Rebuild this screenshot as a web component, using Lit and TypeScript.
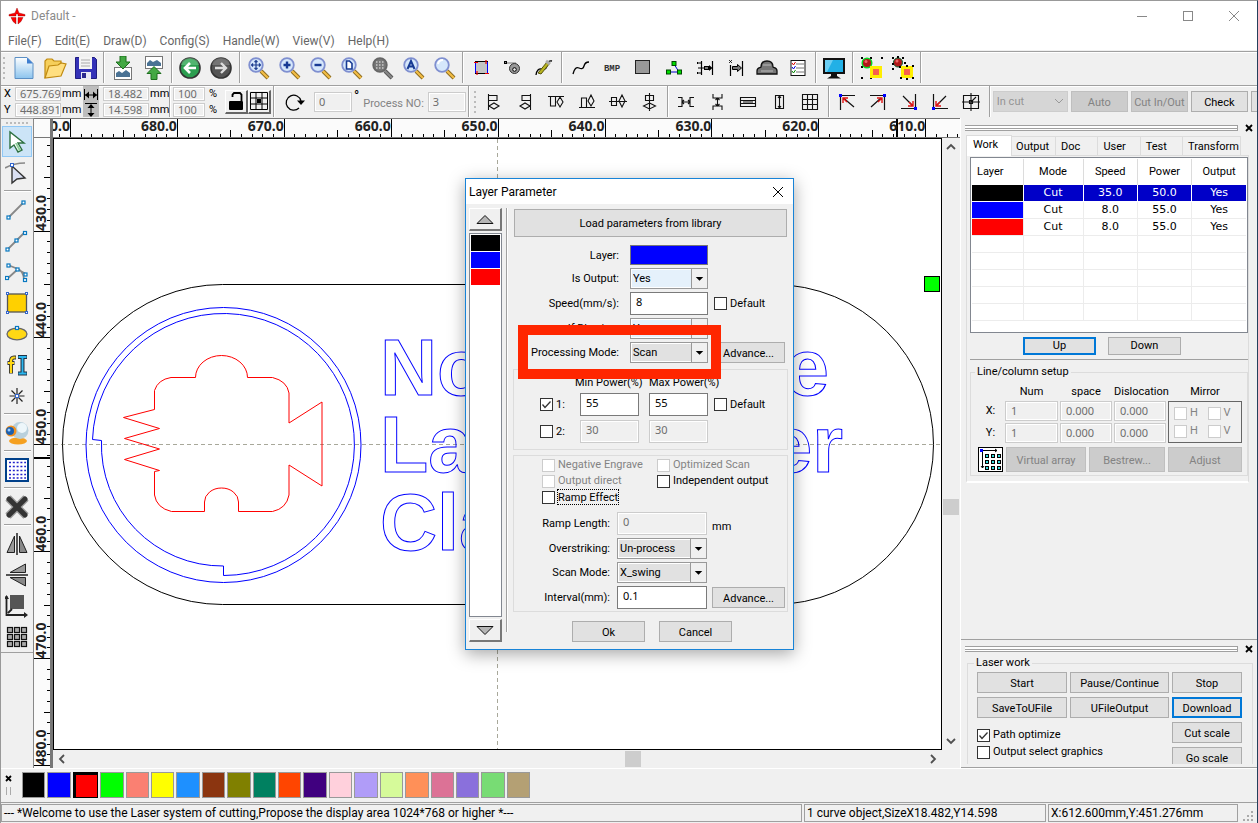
import { LitElement, html, css, svg } from "lit";
import { customElement } from "lit/decorators.js";
import { classMap } from "lit/directives/class-map.js";
import { styleMap } from "lit/directives/style-map.js";

type Tool = { name: string; art: unknown };

const icon = (art: unknown, size = 24) =>
  html`<svg class="ic" width=${size} height=${size} viewBox="0 0 24 24" aria-hidden="true">${art}</svg>`;

/* ---------- magnifier family ---------- */
const lens = (inside: unknown, grey = false) => svg`
  <path d="M14 15l7 7" stroke=${grey ? "#555" : "#8a6a20"} stroke-width="4"/>
  <path d="M14 15l7 7" stroke=${grey ? "#888" : "#f3bd45"} stroke-width="2.2"/>
  <circle cx="9" cy="9" r="6.800" fill=${grey ? "#777" : "#d5e7fb"} stroke=${grey ? "#666" : "#7f8fd0"} stroke-width="1.800"/>
  ${inside}`;

const fileTools: Tool[][] = [
  [
    { name: "New", art: svg`<defs><linearGradient id="pg" x1="0" y1="0" x2="0" y2="1"><stop offset="0" stop-color="#fff"/><stop offset="1" stop-color="#8cc4ee"/></linearGradient></defs>
      <path d="M3 1.500h12l6 6v15H3z" fill="url(#pg)" stroke="#5b8fc4"/><path d="M15 1.500v6h6z" fill="#3f7fd0"/>` },
    { name: "Open", art: svg`<path d="M2 22V5l2-2h5l2 2h7v5" fill="#f6cf5b" stroke="#c08a10" stroke-width="1.200"/><path d="M2 22L6 10l9-1 3-2 5 1-5 12z" fill="#ffdf80" stroke="#c08a10" stroke-width="1.200"/>` },
    { name: "Save", art: svg`<path d="M1.500 1.500h19l2 2v19h-21z" fill="#3432b8" stroke="#1f1d80"/><rect x="5" y="1" width="13" height="12" fill="#f4f4f4"/><path d="M7 4h9M7 7h9M7 10h9" stroke="#aaa"/><rect x="7" y="16" width="10" height="7" fill="#e9e9f5"/><rect x="8" y="17" width="4" height="5" fill="#2a288f"/>` },
  ],
  [
    { name: "Import", art: svg`<rect x="3.500" y="11.500" width="17" height="12" fill="#fff" stroke="#777"/><path d="M5 21v-4l3-2 3 2 4-3 4 3v4z" fill="#4a7294"/><path d="M9 0h6v6h4l-7 7-7-7h4z" fill="#43a843" stroke="#1d6e1d"/>` },
    { name: "Export", art: svg`<rect x="3.500" y=".5" width="17" height="12" fill="#fff" stroke="#777"/><path d="M5 10V7l3-3 3 2 4-2 4 3v3z" fill="#4a7294"/><path d="M9 23.500h6v-6h4l-7-7-7 7h4z" fill="#43a843" stroke="#1d6e1d"/>` },
  ],
  [
    { name: "Undo", art: svg`<circle cx="11" cy="12" r="10" fill="#2c9e50" stroke="#333" stroke-width="1.600"/><path d="M2 9a9 7 0 0 1 18 0z" fill="#6cc486" opacity=".6"/><path d="M17 12H7m4-5l-5 5 5 5" fill="none" stroke="#fff" stroke-width="2.600"/>` },
    { name: "Redo", art: svg`<circle cx="11" cy="12" r="10" fill="#555" stroke="#333" stroke-width="1.600"/><path d="M2 9a9 7 0 0 1 18 0z" fill="#8a8a8a" opacity=".6"/><path d="M5 12h10m-4-5l5 5-5 5" fill="none" stroke="#ddd" stroke-width="2.400"/>` },
  ],
  [
    { name: "Pan", art: lens(svg`<path d="M9 4.500v9M4.500 9h9M7.500 6L9 4.500 10.500 6M7.500 12L9 13.500l1.500-1.500M6 7.500L4.500 9 6 10.500M12 7.500L13.500 9 12 10.500" stroke="#1f3f90" stroke-width="1.200" fill="none"/>`) },
    { name: "Zoom in", art: lens(svg`<path d="M9 5.500v7M5.500 9h7" stroke="#173a94" stroke-width="2.400"/>`) },
    { name: "Zoom out", art: lens(svg`<path d="M5.500 9h7" stroke="#173a94" stroke-width="2.400"/>`) },
    { name: "Zoom page", art: lens(svg`<path d="M6.500 5h3l2.500 2.500V13H6.500z" fill="#fff" stroke="#173a94" stroke-width="1.600"/>`) },
    { name: "Zoom data", art: lens(svg`<path d="M5 6h8M5 9h8M5 12h8" stroke="#ccc" stroke-width="1.400" stroke-dasharray="1.500 1.500"/>`, true) },
    { name: "Zoom all", art: lens(svg`<path d="M5.500 13L9 5l3.500 8M7 10.500h4" fill="none" stroke="#173a94" stroke-width="2"/>`) },
    { name: "Zoom selection", art: lens(svg`<path d="M5 8a5 5 0 0 1 5-4" stroke="#fff" stroke-width="2" fill="none"/>`) },
  ],
  [
    { name: "Track frame", art: svg`<rect x="5.500" y="5.500" width="12" height="12" fill="#c4c4c4" stroke="#000"/><path d="M5.500 6v11M17.500 6v11" stroke="#00f"/><path d="M4 6.500h4M16 4v4M15 17.500h4M7 15v4" stroke="#e00" stroke-width="1.200"/>` },
    { name: "Cut property", art: svg`<path d="M4 7h11" stroke="#777"/><rect x="3.500" y="5.500" width="2" height="2" fill="#888" stroke="#000"/><circle cx="13.500" cy="12.500" r="5" fill="#999" stroke="#333"/><circle cx="13.500" cy="13.500" r="1.800" fill="#eee" stroke="#000"/>` },
    { name: "Set origin", art: svg`<path d="M4 19q1-7 6-6t5-4q1-5 5-4" fill="none" stroke="#000" stroke-width="1.300"/><path d="M6 17l9-11 3 1-9 11z" fill="#b8b420" stroke="#55520a"/><path d="M14 5l4 3" stroke="#aaa" stroke-width="3"/>` },
  ],
  [
    { name: "Curve smooth", art: svg`<path d="M4 18q2-8 6-6t5-2q1-4 5-4" fill="none" stroke="#000" stroke-width="1.300"/>` },
    { name: "Bitmap", art: svg`<text x="12" y="15" text-anchor="middle" class="bmp">BMP</text>` },
    { name: "Array output", art: svg`<rect x="4.500" y="4.500" width="14" height="13" fill="#999" stroke="#222"/>` },
    { name: "Check data", art: svg`<path d="M12 8l5 8H7" fill="none" stroke="#00c"/><g fill="#0d0" stroke="#040"><rect x="10" y="5.500" width="4" height="4"/><rect x="4.500" y="14" width="4" height="4"/><rect x="15.500" y="14" width="4" height="4"/></g>` },
    { name: "Offset", art: svg`<path d="M8.500 5v14M19.500 5v14" stroke="#000" stroke-width="1.200"/><path d="M9 12h3" stroke="#000"/><rect x="11.500" y="10.500" width="4" height="3" fill="#777" stroke="#000"/><path d="M16 9l3.500 3-3.500 3z"/><path d="M4.500 6v2M4.500 16v2M5 7h3M5 12h3M5 17h3" stroke="#000"/>` },
    { name: "Merge", art: svg`<path d="M6.500 9v11M18.500 5v15" stroke="#000" stroke-width="1.200"/><path d="M5 4l3 3M8 4L5 7" stroke="#000" stroke-width=".8"/><path d="M8.500 10.500h5V8.500l4 3.500-4 3.500v-2h-5z" fill="#777" stroke="#000"/>` },
    { name: "Delete overlap", art: svg`<path d="M2 15c0-4 3-3 4-4 0-5 3-6 6-6s6 1 6 6c1 1 4 0 4 4v3H2z" fill="#777" stroke="#111" stroke-width="1.300"/><path d="M6 15h12M8 9h8" stroke="#bbb"/>` },
    { name: "Options", art: svg`<rect x="5" y="4.500" width="14" height="15" fill="#fff" stroke="#111"/><path d="M10 8h8M10 12h8M10 16h8" stroke="#777"/><path d="M6 7l1.500 2 2-3" fill="none" stroke="#d00"/><path d="M6 11l1.500 2 2-3" fill="none" stroke="#00d"/><path d="M6 15l1.500 2 2-3" fill="none" stroke="#080"/>` },
  ],
  [
    { name: "Preview", art: svg`<rect x="0" y="2" width="22" height="16" fill="#111"/><rect x="2" y="4" width="18" height="12" fill="#22b0e6"/><path d="M2 4h8L4 16H2z" fill="#8bdcf8" opacity=".7"/><path d="M8 18h6v2l4 2.500H4L8 20z" fill="#111"/>` },
  ],
  [
    { name: "Group", art: svg`<g fill="#000"><path d="M1 1h2v2H1zM10 1h2v2h-2zM21 1h2v2h-2zM1 10h2v2H1zM1 21h2v2H1zM10 21h2v2h-2z"/></g><circle cx="7" cy="7" r="4.800" fill="#b01818" stroke="#0d2" stroke-width="1.400"/><circle cx="6" cy="5.500" r="1.500" fill="#e66"/><rect x="11.500" y="11.500" width="9" height="9" fill="#f8604c" stroke="#ffee00" stroke-width="3"/>` },
    { name: "Ungroup", art: svg`<circle cx="7" cy="6.500" r="4.500" fill="#b01818" stroke="#063"/><circle cx="6" cy="5" r="1.500" fill="#e66"/><rect x="11.500" y="11.500" width="9" height="9" fill="#f8604c" stroke="#ffee00" stroke-width="3"/><path fill="#000" d="M1 1h2v2H1zM6 0h2v2H6zM11 1h2v2h-2zM1 7h2v2H1zM13 6h2v2h-2zM1 12h2v2H1zM8 10h2v2H8zM15 9h2v2h-2zM21 9h2v2h-2zM21 21h2v2h-2zM9 21h2v2H9zM15 22h2v2h-2z"/>` },
  ],
];

const thin = (d: string) => svg`<path d=${d} fill="none" stroke="#111" stroke-width="1.100"/>`;
const corner = (line: string, x: number, y: number, arrow: string) => svg`
  <path d=${line} fill="none" stroke="#111" stroke-width="1.200"/>
  <path d=${arrow} fill="none" stroke="#e01010" stroke-width="1.400"/>
  <rect x=${x} y=${y} width="3" height="3" fill="#00f"/>`;

const alignTools: Tool[][] = [
  [
    { name: "Align left", art: thin("M6.500 4v16M7 5.500h8v5H7M7 16l5-3 5 3-5 3z") },
    { name: "Align right", art: thin("M17.500 4v16M17 5.500H9v5h8M17 16l-5-3-5 3 5 3z") },
    { name: "Align top", art: thin("M4 6.500h16M6.500 7v9h5V7M16 7l3 5-3 5-3-5z") },
    { name: "Align bottom", art: thin("M4 17.500h16M6.500 17V8h5v9M16 5l3 6-3 5-3-5z") },
    { name: "Center vertical", art: thin("M3 11.500h18M5.500 7.500h5v8h-5zM16 5l3 6-3 6-3-6z") },
    { name: "Center horizontal", art: thin("M12.500 3v18M8.500 5.500h8v5h-8zM12.500 13l6 3-6 3-6-3z") },
  ],
  [
    { name: "Equal horizontal space", art: thin("M4 7.500h4v9H4M20 7.500h-4v9h4M8 12h8M10 10l-2 2 2 2M14 10l2 2-2 2") },
    { name: "Equal vertical space", art: thin("M8 4v4h9V4M8 20v-4h9v4M12.500 8v8M10.500 10l2-2 2 2M10.500 14l2 2 2-2") },
    { name: "Same width", art: thin("M4.500 7.500h15v9h-15zM5 13.500h14M5 10.500h14M7 12h10") },
    { name: "Same height", art: thin("M8.500 5.500h8v13h-8zM12.500 6v12M11 8l1.500-2 1.500 2M11 16l1.500 2 1.500-2") },
    { name: "Same size", art: thin("M4.500 4.500h15v15h-15zM9.500 5v14M14.500 5v14M5 9.500h14M5 14.500h14") },
  ],
  [
    { name: "Top left", art: corner("M5.500 20V5.500H20M19 17L9 8.500", 4, 4, "M8 13V8h5M8 8l4 4") },
    { name: "Top right", art: corner("M18.500 20V5.500H4M5 17l10-9", 17, 4, "M11 8h5v5M16 8l-4 4") },
    { name: "Bottom right", art: corner("M18.500 4v14.500H4M6 6l9 9", 17, 17, "M16 11v5h-5M16 16l-4-4") },
    { name: "Bottom left", art: corner("M5.500 4v14.500H20M18 6L9 15", 4, 17, "M8 11v5h5M8 16l4-4") },
    { name: "Page center", art: thin("M4.500 5.500h15v13h-15zM12 3v18M3 12h18M12 12l5-5M10.500 10.500h3v3h-3z") },
  ],
];

const node = (x: number, y: number) => svg`<rect x=${x - 1.5} y=${y - 1.5} width="3" height="3" fill="#fff" stroke="#0878c0" stroke-width="1.200"/>`;
const sideTools: Tool[][] = [
  [
    { name: "Select", art: svg`<path d="M5 2v16l4-3 4 7 4-2-4-7h6z" fill="#fff" stroke="#2d7040" stroke-width="1.400"/><path d="M10 13l4 8 2-1-4-7z" fill="#8fd09c"/>` },
    { name: "Edit node", art: svg`<path d="M0 7q9-5 20-5" fill="none" stroke="#888" stroke-width="1.600"/><path d="M7 5v17l5-4 8-1z" fill="#d9dff2" stroke="#333" stroke-width="1.400"/><rect x="5.500" y="2.500" width="3" height="3" fill="#fff" stroke="#36c"/>` },
  ],
  [
    { name: "Line", art: svg`<path d="M3 20L19 4" stroke="#888" stroke-width="1.800"/>${node(3.5, 19.5)}${node(18.5, 4.5)}` },
    { name: "Polyline", art: svg`<path d="M2 21L20 3" stroke="#888" stroke-width="1.800"/>${node(2.5, 20.5)}${node(11.5, 11.5)}${node(20, 4)}` },
    { name: "Bezier", art: svg`<path d="M2 19L13 9M3 5l10 4q5 2 6 10M12 9l9 5" fill="none" stroke="#888" stroke-width="1.800"/>${node(3.5, 5.5)}${node(2, 18)}${node(12.5, 9.5)}${node(20.5, 14.5)}${node(20, 20)}` },
    { name: "Rectangle", art: svg`<rect x="2.500" y="3" width="19" height="18" fill="#ffd000" stroke="#555" stroke-width="1.300"/><g fill="#fff" stroke="#36c"><rect x="1.500" y="1.500" width="2" height="2"/><rect x="20.500" y="1.500" width="2" height="2"/><rect x="1.500" y="20.500" width="2" height="2"/><rect x="20.500" y="20.500" width="2" height="2"/></g>` },
    { name: "Ellipse", art: svg`<ellipse cx="12" cy="12" rx="10" ry="5.800" fill="#ffd814" stroke="#666" stroke-width="1.300"/>${node(12, 6)}` },
    { name: "Text", art: svg`<path d="M11 4.500h-2q-3 0-3 4v12M2.500 10h7" fill="none" stroke="#333" stroke-width="4"/><path d="M10.500 4.500h-1.500q-3 0-3 4v11.500M3 10h6" fill="none" stroke="#ffd814" stroke-width="2.200"/><path d="M13 4h9M13 20.500h9M17.500 4v16" stroke="#234" stroke-width="4"/><path d="M13.500 4h8M13.500 20.500h8M17.500 4v16" stroke="#2bb7f0" stroke-width="1.800"/>` },
    { name: "Point", art: svg`<path d="M12 4v16M4.500 12h15M6.500 6.500l11 11M17.500 6.500l-11 11" stroke="#222" stroke-width="1.200"/><rect x="10.500" y="10.500" width="3" height="3" fill="#fff" stroke="#36c"/>` },
  ],
  [{ name: "Camera", art: svg`<ellipse cx="13" cy="20" rx="9" ry="3.500" fill="#f5a020"/><circle cx="15" cy="9.500" r="8.500" fill="#b9d0dc"/><circle cx="17" cy="7" r="5" fill="#edf6fa"/><circle cx="6" cy="10" r="5.500" fill="#f09020"/><circle cx="5" cy="10" r="4" fill="#1c5fae"/><circle cx="4" cy="9" r="1.500" fill="#9cf"/>` }],
  [{ name: "Grid", art: svg`<rect x="1" y="1" width="22" height="22" fill="#fff" stroke="#00408a" stroke-width="2"/><path d="M4 4.500h17M4 8.500h17M4 12.500h17M4 16.500h17M4 20h17" stroke="#22c" stroke-width="1.600" stroke-dasharray="2 1.800"/>` }],
  [{ name: "Delete", art: svg`<path d="M3 3l18 18M21 3L3 21" stroke="#999" stroke-width="7.500"/><path d="M4 4l16 16M20 4L4 20" stroke="#333" stroke-width="5" stroke-linecap="round"/>` }],
  [
    { name: "Mirror horizontal", art: svg`<path d="M9.500 4v16.500H2z" fill="#999" stroke="#222"/><path d="M14.500 4v16.500H22z" fill="#888" stroke="#222"/><path d="M12 1v22" stroke="#222" stroke-width="1.500"/>` },
    { name: "Mirror vertical", art: svg`<path d="M20.500 1v8.500H5z" fill="#999" stroke="#222"/><path d="M20.500 23v-8.500H5z" fill="#888" stroke="#222"/><path d="M1 12h22" stroke="#222" stroke-width="1.500"/>` },
    { name: "Put to origin", art: svg`<rect x="5" y="1" width="14" height="14" fill="#555"/><path d="M1.500 2v19H21M3 19l4-4" fill="none" stroke="#222" stroke-width="1.800"/><path d="M-1 5l2.500-4L4 5zM19 18l4 3-4 3z" fill="#222"/>` },
    { name: "Array", art: svg`<g fill="#aaa" stroke="#111" stroke-width="1.200">${[2, 9, 16].map((x) => [2, 9, 16].map((y) => svg`<rect x=${x + 0.5} y=${y + 0.5} width="5" height="5"/>`))}</g>` },
  ],
];

const swatches = [
  "#000000", "#0000ff", "#ff0000", "#00ff00", "#fa8072", "#ffff00", "#1e90ff", "#8b3510", "#808000", "#008060",
  "#ff4500", "#40007f", "#ffd0dc", "#b09cf8", "#d6fa9a", "#ff9058", "#dc7296", "#8a70dc", "#78dc74", "#b4a074",
];

const layers = [
  { color: "#000000", mode: "Cut", speed: "35.0", power: "50.0", output: "Yes" },
  { color: "#0000ff", mode: "Cut", speed: "8.0", power: "55.0", output: "Yes" },
  { color: "#ff0000", mode: "Cut", speed: "8.0", power: "55.0", output: "Yes" },
];

const STEP = 106.9;
const range = (n: number) => Array.from({ length: n }, (_, i) => i);

const base = css`
  * { box-sizing: border-box; }
  :host { font: 11px/14px Roboto, sans-serif; color: #000; }
  button, input, select { font: inherit; color: inherit; margin: 0; padding: 0; border-radius: 0; min-width: 0; }
  .ic { display: block; flex: none; }
  .btn { background: #e1e1e1; border: 1px solid #adadad; height: 21px; white-space: nowrap; text-align: center; line-height: 16px; padding-top: 2px; }
  .btn.focus { border: 2px solid #0078d7; }
  .btn:disabled { background: #ccc; border-color: #bfbfbf; color: #838383; }
  .field { background: #fff; border: 1px solid #7a7a7a; height: 23px; padding: 0 5px 4px; width: 100%; font: 11px/14px "Noto Sans", sans-serif; }
  .field:disabled { background: #f0f0f0; border-color: #ccc; color: #6d6d6d; box-shadow: inset 0 0 0 1px #fff; }
  .check { display: inline-flex; align-items: center; gap: 3px; white-space: nowrap; line-height: 16px; }
  .check.off { color: #838383; }
  .check input { appearance: none; width: 13px; height: 13px; border: 1px solid #333; background: #fff; flex: none; }
  .check input:disabled { border-color: #ccc; }
  .check input:checked { background: #fff url("data:image/svg+xml,%3Csvg xmlns='http://www.w3.org/2000/svg' viewBox='0 0 11 11'%3E%3Cpath d='M1.500 5.500l2.500 3 5.500-6' fill='none' stroke='%23333' stroke-width='1.300'/%3E%3C/svg%3E"); }
`;

@customElement("layer-dialog")
export class LayerDialog extends LitElement {
  static styles = [base, css`
    :host { display: flex; flex-direction: column; width: 329px; background: #f0f0f0; border: 1px solid #1883d7; box-shadow: 0 4px 16px rgba(0, 0, 0, .35); }
    header { display: flex; justify-content: space-between; align-items: center; height: 25px; background: #fff; padding: 0 9px 0 3px; font-size: 12px; }
    header button { border: 0; background: none; display: flex; }
    .body { display: flex; padding: 4px 5px 7px 3px; }
    .rail { width: 33px; display: flex; flex-direction: column; gap: 2px; }
    .arrow { height: 23px; background: #f0f0f0; border: 1px solid #fff; border-right: 2px solid #777; border-bottom: 2px solid #777; display: flex; align-items: center; justify-content: center; }
    .list { flex: 1; border: 1px solid #828790; background: #fff; padding: 1px; display: flex; flex-direction: column; gap: 1px; }
    .list i { height: 16px; }
    .rule { width: 2px; background: #a0a0a0; border-right: 1px solid #fff; margin: 0 5px 10px 4px; }
    .main { flex: 1; min-width: 0; display: flex; flex-direction: column; }
    .load { height: 28px; margin: 1px 1px 8px 1px; }
    .top, .powers, .scan { display: grid; align-items: center; }
    .top { grid-template-columns: 112px 78px 73px; column-gap: 4px; row-gap: 3px; padding-left: 1px; margin-bottom: 6px; }
    .top .check { padding-left: 2px; }
    .lab { text-align: right; padding: 1px 7px 0 0; white-space: nowrap; }
    .sw { height: 20px; border: 1px solid #777; }
    .combo { display: grid; position: relative; height: 21px; }
    .combo select { appearance: none; width: 100%; height: 21px; border: 1px solid #999; padding: 1px 0 0 2px; background: #e1e1e1; box-shadow: inset 0 0 0 1px #fff; }
    .combo.light select { background: #e5f1fb; }
    .combo svg { position: absolute; right: 1px; top: 1px; background: #f0f0f0; border-left: 1px solid #999; pointer-events: none; }
    .box { border: 1px solid #dcdcdc; }
    .powers { height: 81px; padding: 5px 2px 5px 26px; grid-template-columns: 40px 69px 65px 1fr; grid-template-rows: 14px 23px 23px; row-gap: 4px; }
    .powers .field { width: 59px; }
    .cap { white-space: nowrap; justify-self: start; padding-top: 2px; }
    .cap.min { margin-left: -5px; }
    .scan { margin-top: 5px; padding: 2px 2px 2px 28px; }
    .opts { display: grid; grid-template-columns: 115px 1fr; grid-template-rows: 14px 14px 14px; row-gap: 2px; margin-bottom: 8px; align-items: center; }
    .focusring { outline: 1px dotted #000; line-height: 13px; padding-top: 1px; }
    .rows { display: grid; grid-template-columns: 75px 90px 73px; column-gap: 5px; row-gap: 3px; align-items: center; margin-left: -5px; }
    .rows .lab { padding-right: 2px; }
    .unit { padding-top: 6px; }
    footer { display: flex; gap: 14px; padding: 9px 0 0 59px; }
    footer .btn { width: 73px; }
  `];

  private combo(id: string, value: string, light = false) {
    return html`<span class=${classMap({ combo: true, light })}>
      <select id=${id}><option>${value}</option></select>
      <svg width="16" height="19" viewBox="0 0 16 19" aria-hidden="true"><path d="M4 8h8l-4 4z"/></svg>
    </span>`;
  }

  render() {
    return html`
      <header><span>Layer Parameter</span>
        <button aria-label="Close"><svg width="12" height="12" viewBox="0 0 12 12"><path d="M1 1l10 10M11 1L1 11" stroke="#000"/></svg></button>
      </header>
      <div class="body">
        <div class="rail">
          <button class="arrow" aria-label="Previous layer"><svg width="20" height="11" viewBox="0 0 20 11"><path d="M2 9.500l8-8 8 8z" fill="#b5b5b5" stroke="#111"/></svg></button>
          <div class="list">${layers.map((l) => html`<i style=${styleMap({ background: l.color })}></i>`)}</div>
          <button class="arrow" aria-label="Next layer"><svg width="20" height="11" viewBox="0 0 20 11"><path d="M2 1.500l8 8 8-8z" fill="#b5b5b5" stroke="#111"/></svg></button>
        </div>
        <div class="rule"></div>
        <div class="main">
          <button class="btn load">Load parameters from library</button>
          <div class="top">
            <span class="lab">Layer:</span><span class="sw" style=${styleMap({ background: layers[1].color })}></span><span></span>
            <label class="lab" for="out">Is Output:</label>${this.combo("out", "Yes", true)}<span></span>
            <label class="lab" for="speed">Speed(mm/s):</label><input class="field" id="speed" value="8"><label class="check"><input type="checkbox">Default</label>
            <label class="lab" for="blow">If Blowing:</label>${this.combo("blow", "Yes", true)}<span></span>
            <label class="lab" for="mode">Processing Mode:</label>${this.combo("mode", "Scan")}<button class="btn">Advance...</button>
          </div>
          <div class="box powers">
            <span></span><span class="cap min">Min Power(%)</span><span class="cap">Max Power(%)</span><span></span>
            <label class="check"><input type="checkbox" checked>1:</label>
            <input class="field" aria-label="Min power 1" value="55"><input class="field" aria-label="Max power 1" value="55">
            <label class="check"><input type="checkbox">Default</label>
            <label class="check"><input type="checkbox">2:</label>
            <input class="field" aria-label="Min power 2" value="30" disabled><input class="field" aria-label="Max power 2" value="30" disabled>
          </div>
          <div class="box scan">
            <div class="opts">
              <label class="check off"><input type="checkbox" disabled>Negative Engrave</label>
              <label class="check off"><input type="checkbox" disabled>Optimized Scan</label>
              <label class="check off"><input type="checkbox" disabled>Output direct</label>
              <label class="check"><input type="checkbox">Independent output</label>
              <label class="check"><input type="checkbox"><span class="focusring">Ramp Effect</span></label>
            </div>
            <div class="rows">
              <label class="lab" for="ramp">Ramp Length:</label><input class="field" id="ramp" value="0" disabled><span class="unit">mm</span>
              <label class="lab" for="over">Overstriking:</label>${this.combo("over", "Un-process")}<span></span>
              <label class="lab" for="swing">Scan Mode:</label>${this.combo("swing", "X_swing")}<span></span>
              <label class="lab" for="gap">Interval(mm):</label><input class="field" id="gap" value="0.1"><button class="btn">Advance...</button>
            </div>
          </div>
          <footer><button class="btn">Ok</button><button class="btn">Cancel</button></footer>
        </div>
      </div>`;
  }
}

@customElement("side-panels")
export class SidePanels extends LitElement {
  static styles = [base, css`
    :host { display: flex; flex-direction: column; width: 297px; flex: none; border-left: 1px solid #fff; overflow: hidden; }
    .upper { flex: 1; min-height: 0; padding: 5px 8px 0 4px; overflow: hidden; }
    .grip { display: flex; align-items: center; gap: 5px; height: 9px; margin-right: -6px; }
    .grip i { flex: 1; height: 6px; border: 1px solid #a0a0a0; border-left: 0; background: linear-gradient(#fff 2px, #a0a0a0 2px 3px, #fff 3px); }
    .grip button { border: 0; background: none; display: flex; padding: 2px; }
    .tabs { display: flex; align-items: flex-end; margin: 3px 0 0 1px; height: 21px; border-bottom: 1px solid #dcdcdc; }
    .tabs button { height: 19px; flex: 42 1 0; border: 1px solid #dcdcdc; border-width: 1px 1px 0 0; background: #f0f0f0; white-space: nowrap; text-align: left; padding: 2px 0 0 5px; }
    .tabs .on { background: #fff; height: 21px; margin-bottom: -1px; padding: 0 0 2px 6px; border-left-width: 1px; flex-grow: 44; }
    .tabs button:nth-child(2) { flex-grow: 45; padding-left: 4px; }
    .tabs button:last-child { flex-grow: 60; margin-right: 8px; }
    .sheet { border: 1px solid #dcdcdc; border-top: 0; border-bottom: 2px solid #fff; padding: 1px 0 5px 3px; margin-left: 1px; }
    .frame { border: 1px solid #828790; background: #fff; height: 176px; padding: 1px; }
    table { border-collapse: collapse; width: 100%; table-layout: fixed; font: 11px/14px "DejaVu Sans", sans-serif; }
    th { font: 11px/14px Roboto, sans-serif; height: 25px; padding: 2px 0 0; border-right: 1px solid #dcdcdc; }
    th:first-child { width: 51px; text-align: left; padding-left: 5px; }
    th:nth-child(2) { width: 60px; }
    td { height: 17px; text-align: center; padding: 0; border: 1px solid #ececec; }
    th:last-child { border-right: 0; }
    td:first-child { border-left: 0; } td:last-child { border-right: 0; }
    .on td { background: #0000c8; color: #fff; border-color: #fff; }
    .chip { height: 16px; }
    .move { display: flex; justify-content: center; gap: 12px; padding: 4px 14px 4px 0; border-bottom: 1px solid #a0a0a0; }
    .move .btn { width: 73px; height: 18px; line-height: 14px; padding-top: 0; }
    fieldset { border: 1px solid #dcdcdc; margin: 0; min-width: 0; }
    legend { padding: 0 2px; margin-left: -3px; }
    .setup { margin-top: 5px; padding: 6px 5px 3px 7px; }
    .cells { display: grid; grid-template-columns: 25px 53px 52px 52px 1fr; column-gap: 2px; row-gap: 2px; align-items: center; text-align: center; }
    .cells .field { height: 20px; padding-bottom: 1px; }
    .mirror { grid-row: 2 / span 2; grid-column: 5; border: 1px solid #666; height: 42px; display: grid; grid-template-columns: 1fr 1fr; align-items: center; padding: 2px 0 2px 5px; }
    .arr { display: grid; grid-template-columns: 25px 80px 76px 1fr; gap: 3px; margin-top: 4px; }
    .arr .btn { height: 25px; }
    .arr .pic { border: 0; background: none; display: flex; }
    .lower { height: 129px; border-top: 1px solid #a0a0a0; padding: 4px 8px 3px 4px; overflow: hidden; display: flex; flex-direction: column; border-bottom: 1px solid #a0a0a0; }
    .laser { margin: 3px -4px 0 2px; flex: 1; min-height: 0; border-bottom: 0; padding: 2px 0 0 9px; overflow: hidden; }
    .laser .in { display: grid; grid-template-columns: 90px 99px 70px; gap: 4px 3px; align-items: center; }
    .span { grid-column: 1 / span 2; grid-row: 3 / span 2; display: flex; flex-direction: column; gap: 1px; align-self: start; padding-top: 5px; }
  `];

  private grip() {
    return html`<div class="grip"><i></i><button aria-label="Close panel"><svg width="8" height="8" viewBox="0 0 8 8"><path d="M1 1l6 6M7 1L1 7" stroke="#000" stroke-width="1.800"/></svg></button></div>`;
  }

  render() {
    return html`
      <section class="upper">
        ${this.grip()}
        <div class="tabs">${["Work", "Output", "Doc", "User", "Test", "Transform"].map((t, i) => html`<button class=${classMap({ on: i === 0 })}>${t}</button>`)}</div>
        <div class="sheet">
          <div class="frame"><table>
            <thead><tr>${["Layer", "Mode", "Speed", "Power", "Output"].map((h) => html`<th>${h}</th>`)}</tr></thead>
            <tbody>
              ${layers.map((l, i) => html`<tr class=${classMap({ on: i === 0 })}><td><div class="chip" style=${styleMap({ background: l.color })}></div></td><td>${l.mode}</td><td>${l.speed}</td><td>${l.power}</td><td>${l.output}</td></tr>`)}
              ${range(5).map(() => html`<tr><td></td><td></td><td></td><td></td><td></td></tr>`)}
            </tbody>
          </table></div>
          <div class="move"><button class="btn focus">Up</button><button class="btn">Down</button></div>
          <fieldset class="setup"><legend>Line/column setup</legend>
            <div class="cells">
              <span></span><span>Num</span><span>space</span><span>Dislocation</span><span>Mirror</span>
              ${["X", "Y"].map((a) => html`<span>${a}:</span>
                <input class="field" aria-label="${a} num" value="1" disabled><input class="field" aria-label="${a} space" value="0.000" disabled><input class="field" aria-label="${a} dislocation" value="0.000" disabled>`)}
              <div class="mirror">${["H", "V", "H", "V"].map((m) => html`<label class="check off"><input type="checkbox" disabled>${m}</label>`)}</div>
            </div>
            <div class="arr">
              <button class="pic" aria-label="Array direction"><svg width="25" height="25" viewBox="0 0 25 25"><rect x=".5" y=".5" width="24" height="24" fill="#fff" stroke="#000"/><path d="M4.500 4v17M4 3.500h15M3 19l1.500 2L6 19M17 2l2 1.500L17 5" fill="none" stroke="#000"/><rect x="2" y="2" width="3" height="3" fill="#00f"/><g fill="#3dd" stroke="#000">${[0, 1, 2].map((x) => [0, 1, 2].map((y) => svg`<rect x=${7.5 + x * 6} y=${7.5 + y * 6} width="3" height="3"/>`))}</g></svg></button>
              <button class="btn" disabled>Virtual array</button><button class="btn" disabled>Bestrew...</button><button class="btn" disabled>Adjust</button>
            </div>
          </fieldset>
        </div>
      </section>
      <section class="lower">
        ${this.grip()}
        <fieldset class="laser"><legend>Laser work</legend>
          <div class="in">
            <button class="btn">Start</button><button class="btn">Pause/Continue</button><button class="btn">Stop</button>
            <button class="btn">SaveToUFile</button><button class="btn">UFileOutput</button><button class="btn focus">Download</button>
            <div class="span"><label class="check"><input type="checkbox" checked>Path optimize</label><label class="check"><input type="checkbox">Output select graphics</label></div>
            <button class="btn">Cut scale</button><button class="btn">Go scale</button>
          </div>
        </fieldset>
      </section>`;
  }
}

@customElement("drawing-board")
export class DrawingBoard extends LitElement {
  static styles = [base, css`
    :host { display: grid; flex: 1; min-width: 0; min-height: 0; grid-template: 20px minmax(0, 1fr) 18px / 19px minmax(0, 1fr) 18px; background: #f0f0f0; border-left: 1px solid #888; overflow: hidden; }
    svg { display: block; width: 100%; height: 100%; }
    .corner, .hr, .vr { background: #fbfbfb; min-width: 0; min-height: 0; overflow: hidden; }
    .corner { border: 1px solid #777; border-width: 1px 3px 1px 0; }
    .hr { grid-column: 2 / span 2; border-top: 1px solid #777; border-bottom: 1px solid #777; }
    .vr { grid-row: 2 / span 2; border-right: 3px solid #777; }
    .canvas { background: #fff; border: 1px solid #000; min-width: 0; min-height: 0; overflow: hidden; }
    .num { font: bold 14px "Noto Sans", sans-serif; fill: #222; text-anchor: end; }
    .sign { font: bold 79px "Liberation Sans", sans-serif; fill: none; stroke: #00f; stroke-width: 1; }
    .end { text-anchor: end; }
    .bar { display: flex; justify-content: space-between; align-items: center; padding: 2px; }
    .bar.v { flex-direction: column; padding: 2px 0; }
    .bar i { background: #cdcdcd; width: 16px; height: 16px; }
    .bar .ar { width: 14px; height: 14px; flex: none; }
    .h { grid-column: 2; }
    .v .sp1 { flex: 350; } .v .sp2 { flex: 222; } .h .sp1 { flex: 557; } .h .sp2 { flex: 285; }
  `];

  private arrow(d: string) {
    return html`<svg class="ar" viewBox="0 0 14 14" aria-hidden="true"><path d=${d} fill="none" stroke="#505050" stroke-width="1.800"/></svg>`;
  }

  render() {
    const minor = range(100);
    return html`
      <div class="corner"></div>
      <div class="hr"><svg>
        <g stroke="#000" shape-rendering="crispEdges">
          ${minor.map((i) => { const x = 17.5 - STEP + i * STEP / 10; return svg`<path d="M${x} 18V${i % 10 === 0 ? 0 : i % 5 === 0 ? 11 : 15}"/>`; })}
          <path d="M844 0v18" stroke-width="2"/>
        </g>
        ${range(9).map((i) => svg`<text class="num" x=${17 + i * STEP} y="12">${690 - i * 10}.0</text>`)}
      </svg></div>
      <div class="vr"><svg>
        <g stroke="#000" shape-rendering="crispEdges">
          ${minor.map((i) => { const y = 93 - STEP + i * STEP / 10; return svg`<path d="M16 ${y}H${i % 10 === 0 ? 0 : i % 5 === 0 ? 10 : 13}"/>`; })}
          <path d="M0 320h16" stroke-width="2"/>
        </g>
        ${range(7).map((i) => svg`<text class="num" transform="translate(12 ${92 + i * STEP}) rotate(-90)" x="35">${430 + i * 10}.0</text>`)}
      </svg></div>
      <div class="canvas"><svg><g transform="translate(-54 -139)" fill="none">
        <path d="M54 444.500H2000M497.500 139V1500" stroke="#a8a89a" stroke-dasharray="4 3"/>
        <rect x="62.500" y="284.500" width="871" height="320" rx="160" stroke="#000"/>
        <circle cx="223.500" cy="445" r="137.500" stroke="#00f"/>
        <path d="M92.500 439.500A131 131 0 1 1 223.500 575.500V566A121 121 0 0 1 101.500 440.500Z" stroke="#00f"/>
        <path d="M154.500 409.500L123.500 417.500l36 11-35 10 35 10.500-35 10.500 35 11-5 1V495q2 13 17 16.500h33V502a17 14 0 0 1 34 0v9.500h34q14-3 16.500-16.500V465l33 21V402l-33 21V393q-2-12-16.500-15.500h-25a26 22 0 0 0-52 0H171q-13 2-16.500 13z" stroke="#f00"/>
        <text class="sign" x="380" y="395">No</text><text class="sign end" x="829" y="395">e</text>
        <text class="sign" x="380" y="472">La</text><text class="sign end" x="843" y="472">er</text>
        <text class="sign" x="380" y="550">Cla</text>
        <rect x="924.500" y="276.500" width="15" height="15" fill="#0f0" stroke="#000"/>
      </g></svg></div>
      <div class="bar v">${this.arrow("M3 9l4-4 4 4")}<span class="sp1"></span><i></i><span class="sp2"></span>${this.arrow("M3 5l4 4 4-4")}</div>
      <div class="bar h">${this.arrow("M9 3L5 7l4 4")}<span class="sp1"></span><i></i><span class="sp2"></span>${this.arrow("M5 3l4 4-4 4")}</div>`;
  }
}

@customElement("app-root")
export class AppRoot extends LitElement {
  static styles = [base, css`
    :host { display: flex; flex-direction: column; position: relative; height: 100vh; background: #f0f0f0; border: 1px solid #999; border-width: 1px 1px 0 1px; border-right-color: #24405c; overflow: hidden; }
    .title { display: flex; align-items: center; height: 30px; background: #fff; color: #8a8a8a; font-size: 12px; padding-left: 7px; flex: none; }
    .title .name { flex: 1; padding-left: 5px; }
    .title button { border: 0; background: none; width: 46px; display: flex; justify-content: center; }
    nav { display: flex; gap: 13px; height: 20px; padding: 0 0 0 7px; background: #fff; color: #666; font-size: 12px; line-height: 18px; align-items: center; border-bottom: 1px solid #f0f0f0; flex: none; }
    nav a { color: inherit; text-decoration: none; }
    .row { display: flex; align-items: center; flex: none; height: 34px; border-top: 1px solid #a0a0a0; box-shadow: inset 0 1px #fff; padding-bottom: 2px; overflow: hidden; }
    .row.two { height: 33px; padding-bottom: 1px; }
    .tool { border: 0; background: none; width: 31px; height: 31px; display: flex; align-items: center; justify-content: center; flex: none; }
    .sep { width: 2px; height: 31px; background: #a0a0a0; border-right: 1px solid #fff; margin: 0 2px; flex: none; }
    .dots { width: 2px; height: 22px; margin: 0 3px 0 2px; flex: none; background: repeating-linear-gradient(#bbb 0 2px, #f0f0f0 2px 5px); }
    .bmp { font: bold 9px "Liberation Mono", monospace; fill: #333; }
    .two .field { height: 14px; line-height: 12px; padding: 0 0 0 4px; width: 46px; }
    .xy { display: grid; grid-template-columns: 10px 46px 17px; column-gap: 1px; row-gap: 2px; align-items: center; padding-left: 3px; flex: none; }
    .wh { display: grid; grid-template-columns: 46px 17px; column-gap: 1px; row-gap: 2px; align-items: center; flex: none; }
    .pc { display: grid; grid-template-columns: 32px 14px; column-gap: 4px; row-gap: 2px; align-items: center; flex: none; margin-right: 2px; }
    .pc .field { width: 32px; }
    .dims { background: #bdbdbd; width: 16px; height: 31px; margin: 0 4px; flex: none; }
    .lock { width: 23px; height: 24px; background: #f0f0f0; border: 1px solid #fff; border-right: 2px solid #666; border-bottom: 2px solid #666; display: flex; align-items: center; justify-content: center; flex: none; }
    .two .big { height: 20px; width: 38px; flex: none; }
    .two .angle { margin-left: 6px; }
    .deg { align-self: flex-start; font-size: 14px; padding: 3px 4px 0 2px; }
    .pno { color: #838383; padding-right: 4px; white-space: nowrap; margin-top: 5px; }
    .cut { appearance: none; width: 75px; height: 21px; background: #ccc; border: 1px solid #bfbfbf; color: #6d6d6d; padding-left: 3px; }
    .pick { position: relative; display: flex; margin: 0 3px 0 0; }
    .pick svg { position: absolute; right: 4px; top: 6px; pointer-events: none; }
    .two .btn { width: 57px; margin-right: 3px; flex: none; }
    .work { flex: 1; min-height: 0; display: flex; }
    .side { width: 32px; flex: none; border-top: 1px solid #a0a0a0; padding-top: 3px; }
    .side .tools { display: flex; flex-direction: column; align-items: center; border-bottom: 1px solid #a0a0a0; }
    .side .hd { width: 22px; height: 2px; margin-bottom: 2px; background: repeating-linear-gradient(90deg, #bbb 0 2px, #f0f0f0 2px 4px); }
    .side .tool { width: 30px; }
    .side .on { background: #cce4f7; border: 1px solid #90c8f6; }
    .side hr { width: 27px; height: 2px; border: 0; border-top: 1px solid #a0a0a0; border-bottom: 1px solid #fff; margin: 2px 0; }
    .pal { display: flex; align-items: flex-start; height: 34px; flex: none; border-top: 1px solid #fff; padding: 3px 0 0 3px; gap: 9px; }
    .pal .x { display: flex; width: 9px; border: 0; background: none; }
    .colors { display: flex; gap: 2px; width: 508px; height: 26px; }
    .colors button { flex: 1; border: 1px solid #999; }
    .colors .on { border: 2px solid #000; border-width: 3px 1px 1px 3px; }
    .status { display: flex; gap: 2px; height: 22px; flex: none; border-top: 1px solid #a0a0a0; padding: 1px 0 2px 0; font-size: 12px; align-items: stretch; }
    .status span { border: 1px solid #a0a0a0; padding-left: 2px; line-height: 16px; white-space: nowrap; overflow: hidden; }
    .status .a { flex: 1; } .status .b { width: 242px; } .status .c { width: 190px; } .status svg { align-self: flex-end; margin: 0 3px 0; }
    .dialog { position: absolute; left: 464px; top: 177px; }
    .mark { position: absolute; left: 517px; top: 324px; width: 203px; height: 54px; border: 10px solid #ff2600; pointer-events: none; }
  `];

  private groups(list: Tool[][]) {
    return list.map((g) => html`${g.map((t) => html`<button class="tool" title=${t.name} aria-label=${t.name}>${icon(t.art)}</button>`)}<i class="sep"></i>`);
  }

  render() {
    return html`
      <header class="title">
        <svg width="18" height="18" viewBox="0 0 18 18" aria-hidden="true"><path d="M9 1l2 5 6 1.500v1.500H10v-2H8v2H1V7.500L7 6zM3 10.500h5V17l-3-2.500zM15 10.500h-5V17l3-2.500z" fill="#f00" stroke="#800" stroke-width=".4"/></svg>
        <span class="name">Default -</span>
        <button aria-label="Minimize"><svg width="12" height="12" viewBox="0 0 12 12"><path d="M1 6.500h10" stroke="#888"/></svg></button>
        <button aria-label="Maximize"><svg width="12" height="12" viewBox="0 0 12 12"><rect x="1.500" y="1.500" width="9" height="9" fill="none" stroke="#888"/></svg></button>
        <button aria-label="Close"><svg width="12" height="12" viewBox="0 0 12 12"><path d="M1 1l10 10M11 1L1 11" stroke="#888"/></svg></button>
      </header>
      <nav>${["File(F)", "Edit(E)", "Draw(D)", "Config(S)", "Handle(W)", "View(V)", "Help(H)"].map((m) => html`<a href="#">${m}</a>`)}</nav>
      <div class="row"><i class="dots"></i>${this.groups(fileTools)}</div>
      <div class="row two">
        <div class="xy">
          <label for="px">X</label><input class="field" id="px" value="675.769" disabled><span>mm</span>
          <label for="py">Y</label><input class="field" id="py" value="448.891" disabled><span>mm</span>
        </div>
        <svg class="dims" viewBox="0 0 16 31" aria-hidden="true"><path d="M1.500 3v11M14.500 3v11M2 17.500h12M2 9h12M8 19v11" stroke="#000"/><path d="M2 9l4-3.500v7zM14 9l-4-3.500v7zM8 18l-3.500 4h7zM8 31l-3.500-4h7z"/></svg>
        <div class="wh">
          <input class="field" aria-label="Width" value="18.482" disabled><span>mm</span>
          <input class="field" aria-label="Height" value="14.598" disabled><span>mm</span>
        </div>
        <i class="sep"></i>
        <div class="pc">
          <input class="field" aria-label="Width percent" value="100" disabled><span>%</span>
          <input class="field" aria-label="Height percent" value="100" disabled><span>%</span>
        </div>
        <button class="lock" aria-label="Lock ratio"><svg width="18" height="20" viewBox="0 0 18 20"><path d="M5.500 6V3.500L7 2h6l1.500 1.500V10" fill="none" stroke="#000" stroke-width="1.800"/><rect x="2" y="10" width="14" height="9" rx="1"/></svg></button>
        <button class="lock" aria-label="Anchor"><svg width="20" height="20" viewBox="0 0 20 20"><path d="M1.500 1.500h17v17h-17zM1 7h18M1 13h18M7 1v18M13 1v18" fill="none" stroke="#000"/><rect x="8" y="8" width="4" height="4"/></svg></button>
        <i class="sep"></i>
        <button class="tool" aria-label="Rotate">${icon(svg`<path d="M18 18a7.500 7.500 0 1 1 2-7" fill="none" stroke="#000" stroke-width="1.300"/><path d="M16 10.500h8L20 15z"/>`)}</button>
        <input class="field big angle" aria-label="Angle" value="0" disabled><span class="deg">°</span>
        <label class="pno" for="pno">Process NO:</label><input class="field big" id="pno" value="3" disabled>
        <i class="sep"></i><i class="dots"></i>
        ${this.groups(alignTools)}
        <span class="pick"><select class="cut" aria-label="Cut type" disabled><option>In cut</option></select>
          <svg width="10" height="8" viewBox="0 0 10 8"><path d="M1 2l4 4 4-4" fill="none" stroke="#999"/></svg></span>
        <button class="btn" disabled>Auto</button><button class="btn" disabled>Cut In/Out</button><button class="btn">Check</button><button class="btn" aria-label="More"></button>
      </div>
      <main class="work">
        <div class="side"><div class="tools"><i class="hd"></i>
          ${sideTools.map((g, gi) => html`${gi ? html`<hr>` : ""}${g.map((t, i) => html`<button class=${classMap({ tool: true, on: gi === 0 && i === 0 })} title=${t.name} aria-label=${t.name}>${icon(t.art)}</button>`)}`)}
        </div></div>
        <drawing-board></drawing-board>
        <side-panels></side-panels>
      </main>
      <div class="pal">
        <button class="x" aria-label="Close palette"><svg width="9" height="24" viewBox="0 0 9 24"><path d="M2 4l5 5M7 4L2 9" stroke="#000" stroke-width="1.800"/><path d="M2.500 15v8M6.500 15v8" stroke="#aaa"/></svg></button>
        <div class="colors">${swatches.map((c, i) => html`<button class=${classMap({ on: i === 2 })} aria-label="Layer ${c}" style=${styleMap({ backgroundColor: c })}></button>`)}</div>
      </div>
      <footer class="status"><span class="a">--- *Welcome to use the Laser system of cutting,Propose the display area 1024*768 or higher *---</span>
        <span class="b">1 curve object,SizeX18.482,Y14.598</span><span class="c">X:612.600mm,Y:451.276mm</span>
        <svg width="11" height="11" viewBox="0 0 11 11" fill="#aaa" aria-hidden="true"><path d="M8 0h2v2H8zM8 4h2v2H8zM8 8h2v2H8zM4 4h2v2H4zM4 8h2v2H4zM0 8h2v2H0z"/></svg>
      </footer>
      <layer-dialog class="dialog" role="dialog" aria-label="Layer Parameter"></layer-dialog>
      <div class="mark"></div>`;
  }
}
